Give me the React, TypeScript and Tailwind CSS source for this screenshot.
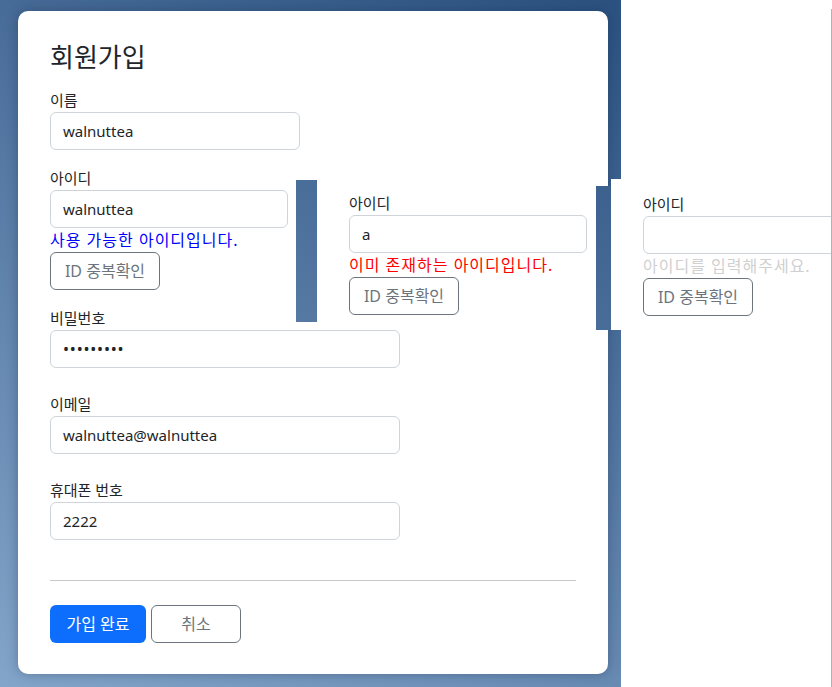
import React from "react";

const font = "font-['Noto_Sans','Noto_Sans_CJK_KR',sans-serif]";

function Label({ children }: { children: React.ReactNode }) {
  return <div className="h-[24px] text-[15px] leading-[24px] text-[#212529]">{children}</div>;
}

function Input({ value, w, type }: { value: string; w: string; type?: string }) {
  return (
    <div
      className={`${w} h-[38px] rounded-[6px] border border-[#ced4da] bg-white px-[12px] flex items-center text-[15px] text-[#212529]`}
    >
      {type === "password" ? (
        <span className="text-[16px] tracking-[0.8px] leading-none">•••••••••</span>
      ) : (
        value
      )}
    </div>
  );
}

function CheckBtn() {
  return (
    <div className="w-[110px] h-[38px] rounded-[6px] border border-[#6c757d] flex items-center justify-center text-[16px] text-[#6c757d]">
      ID 중복확인
    </div>
  );
}

const grad =
  "bg-[linear-gradient(27deg,#84a5ca,#2b5180)] bg-fixed bg-[length:621px_687px] bg-no-repeat";

const help = "h-[24px] text-[16px] leading-[24px] tracking-[1px] whitespace-nowrap";

export default function App() {
  return (
    <div className={`relative w-[832px] h-[687px] overflow-hidden bg-white ${font}`}>
      <div className={`w-[621px] h-[687px] ${grad} pl-[18px] pt-[11px]`}>
        <div className="w-[590px] h-[663px] bg-white rounded-[10px] shadow-[0_0_12px_rgba(20,40,70,0.35)] px-[32px] pt-[29px]">
          <div className="h-[34px] text-[26px] leading-[34px] text-[#212529]">회원가입</div>
          <div className="mt-[14px]">
            <Label>이름</Label>
            <Input value="walnuttea" w="w-[250px]" />
          </div>
          <div className="mt-[16px]">
            <Label>아이디</Label>
            <Input value="walnuttea" w="w-[238px]" />
            <div className={`${help} text-[#0000ff]`}>사용 가능한 아이디입니다.</div>
            <CheckBtn />
          </div>
          <div className="mt-[16px]">
            <Label>비밀번호</Label>
            <Input value="" type="password" w="w-[350px]" />
          </div>
          <div className="mt-[24px]">
            <Label>이메일</Label>
            <Input value="walnuttea@walnuttea" w="w-[350px]" />
          </div>
          <div className="mt-[24px]">
            <Label>휴대폰 번호</Label>
            <Input value="2222" w="w-[350px]" />
          </div>
          <div className="mt-[40px] h-px bg-[#c9c9c9]" />
          <div className="mt-[24px] flex gap-[5px]">
            <div className="w-[96px] h-[38px] rounded-[6px] bg-[#0d6efd] text-white flex items-center justify-center text-[16px]">
              가입 완료
            </div>
            <div className="w-[90px] h-[38px] rounded-[6px] border border-[#6c757d] text-[#6c757d] flex items-center justify-center text-[16px]">
              취소
            </div>
          </div>
        </div>
      </div>

      {/* overlay panel 1: duplicate id */}
      <div className="absolute left-[296px] top-[180px] w-[300px] h-[142px] flex bg-white">
        <div className={`w-[21px] h-full ${grad}`} />
        <div className="pl-[32px] pt-[11px]">
          <Label>아이디</Label>
          <Input value="a" w="w-[238px]" />
          <div className={`${help} text-[#ff0000]`}>이미 존재하는 아이디입니다.</div>
          <CheckBtn />
        </div>
      </div>

      {/* overlay panel 2: empty id */}
      <div className="absolute left-[611px] top-[179px] w-[221px] h-[151px] bg-white" />
      <div className={`absolute left-[596px] top-[186px] w-[15px] h-[144px] ${grad}`} />
      <div className="absolute left-[643px] top-[192px]">
        <Label>아이디</Label>
        <div className="w-[238px] h-[38px] rounded-[6px] border border-[#ced4da] bg-white" />
        <div className={`${help} text-[#d0d0d0]`}>아이디를 입력해주세요.</div>
        <CheckBtn />
      </div>

      {/* right edge line */}
      <div className="absolute left-[831px] top-[9px] w-px h-[678px] bg-[#aab3c2]" />
    </div>
  );
}
